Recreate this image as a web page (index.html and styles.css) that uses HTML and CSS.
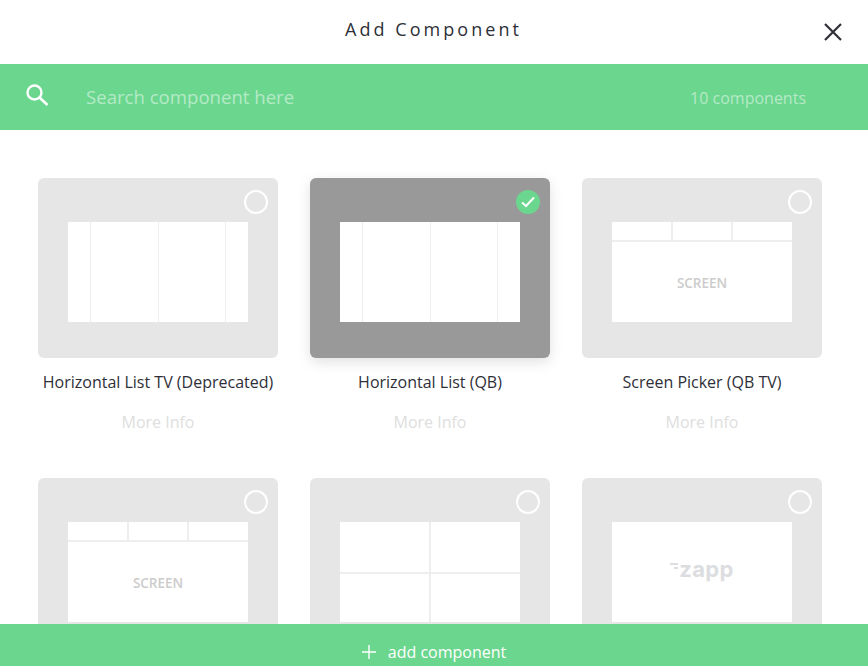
FILE: index.html
```html
<!doctype html>
<html>
<head>
    <title>Add Component</title>
    <link rel="stylesheet" href="styles.css">
</head>
<body>
    <div class="modal">
        <div class="modal-header">
            <div class="modal-title">Add Component</div>
            <button class="close-button">
                <svg width="20" height="20" viewBox="0 0 20 20"><path d="M2 2 L18 18 M18 2 L2 18" stroke="#2e2f38" stroke-width="2.2" fill="none"/></svg>
            </button>
        </div>
        <div class="search-bar">
            <svg class="search-icon" width="26" height="26" viewBox="0 0 26 26"><circle cx="10.5" cy="10.5" r="7" stroke="#fff" stroke-width="2.4" fill="none"/><path d="M15.5 15.5 L23.5 23" stroke="#fff" stroke-width="2.6" fill="none"/></svg>
            <input class="search-input" type="text" placeholder="Search component here">
            <div class="search-count">10 components</div>
        </div>
        <div class="grid-scroll">
            <div class="component-grid">
                <div class="component">
                    <div class="thumb">
                        <span class="radio"></span>
                        <div class="preview preview-list">
                            <div class="col-edge"></div><div class="col-mid"></div><div class="col-mid"></div><div class="col-edge"></div>
                        </div>
                    </div>
                    <div class="component-name">Horizontal List TV (Deprecated)</div>
                    <div class="more-info">More Info</div>
                </div>
                <div class="component">
                    <div class="thumb thumb-selected">
                        <span class="radio radio-checked">
                            <svg width="14" height="12" viewBox="0 0 14 12"><path d="M1 6.5 L5 10 L13 1.5" stroke="#fff" stroke-width="2" fill="none"/></svg>
                        </span>
                        <div class="preview preview-list">
                            <div class="col-edge"></div><div class="col-mid"></div><div class="col-mid"></div><div class="col-edge"></div>
                        </div>
                    </div>
                    <div class="component-name">Horizontal List (QB)</div>
                    <div class="more-info">More Info</div>
                </div>
                <div class="component">
                    <div class="thumb">
                        <span class="radio"></span>
                        <div class="preview preview-screen">
                            <div class="tabs"><div></div><div></div><div></div></div>
                            <div class="screen-label">SCREEN</div>
                        </div>
                    </div>
                    <div class="component-name">Screen Picker (QB TV)</div>
                    <div class="more-info">More Info</div>
                </div>
                <div class="component">
                    <div class="thumb">
                        <span class="radio"></span>
                        <div class="preview preview-screen">
                            <div class="tabs"><div></div><div></div><div></div></div>
                            <div class="screen-label">SCREEN</div>
                        </div>
                    </div>
                </div>
                <div class="component">
                    <div class="thumb">
                        <span class="radio"></span>
                        <div class="preview preview-quad">
                            <div></div><div></div><div></div><div></div>
                        </div>
                    </div>
                </div>
                <div class="component">
                    <div class="thumb">
                        <span class="radio"></span>
                        <div class="preview preview-logo">
                            <span class="logo-bars"><i></i><i></i></span><span class="logo-text">zapp</span>
                        </div>
                    </div>
                </div>
            </div>
        </div>
        <div class="add-bar">
            <svg width="14" height="14" viewBox="0 0 14 14"><path d="M7 0 V14 M0 7 H14" stroke="#fff" stroke-width="1.4" fill="none"/></svg>
            <span>add component</span>
        </div>
    </div>
</body>
</html>
```

FILE: styles.css
```css
body {
    font-family: "Open Sans", sans-serif;
    margin: 0;
    padding: 0;
    background-color: #fff;
}
.modal {
    display: flex;
    flex-direction: column;
    height: 100vh;
    overflow: hidden;
}
.modal-header {
    flex: none;
    height: 64px;
    display: flex;
    align-items: center;
    justify-content: center;
    position: relative;
}
.modal-title {
    font-size: 18px;
    letter-spacing: 3.05px;
    color: #2e2f38;
    margin: 0 1px 6px 0;
}
.close-button {
    position: absolute;
    top: 22px;
    right: 25px;
    width: 20px;
    height: 20px;
    padding: 0;
    border: none;
    background: none;
}
.search-bar {
    flex: none;
    height: 66px;
    background-color: #6ad68e;
    display: flex;
    align-items: center;
    padding: 0 62px 0 24px;
}
.search-icon {
    flex: none;
    margin: 0 36px 5px 0;
}
.search-input {
    flex: 1;
    border: none;
    outline: none;
    padding: 0;
    margin-bottom: 2px;
    background: none;
    font-family: inherit;
    font-size: 18.6px;
    color: #fff;
}
.search-input::placeholder {
    color: rgba(255,255,255,0.5);
    opacity: 1;
}
.search-count {
    font-size: 16px;
    color: rgba(255,255,255,0.5);
    margin-top: 2px;
}
.grid-scroll {
    flex: 1;
    min-height: 0;
    overflow: hidden;
    padding: 48px 0 0 38px;
}
.component-grid {
    display: grid;
    grid-template-columns: repeat(3, 240px);
    grid-auto-rows: 300px;
    column-gap: 32px;
}
.thumb {
    position: relative;
    height: 180px;
    box-sizing: border-box;
    padding-top: 44px;
    background-color: #e6e6e6;
    border-radius: 6px;
}
.thumb-selected {
    background-color: #999;
    box-shadow: 0 4px 14px rgba(0,0,0,0.12);
}
.radio {
    position: absolute;
    top: 12px;
    right: 10px;
    width: 24px;
    height: 24px;
    box-sizing: border-box;
    border: 2px solid #fff;
    border-radius: 50%;
}
.radio-checked {
    border: none;
    background-color: #6ad68e;
    display: flex;
    align-items: center;
    justify-content: center;
}
.preview {
    width: 180px;
    height: 100px;
    margin: 0 auto 0 30px;
    background-color: #fff;
}
.preview-list {
    display: flex;
}
.col-edge {
    width: 22px;
}
.col-mid {
    flex: 1;
}
.preview-list div + div {
    border-left: 1px solid #eee;
}
.preview-screen {
    display: flex;
    flex-direction: column;
}
.tabs {
    flex: none;
    height: 18px;
    display: flex;
    border-bottom: 2px solid #eee;
}
.tabs div {
    flex: 1;
}
.tabs div + div {
    border-left: 2px solid #eee;
}
.screen-label {
    flex: 1;
    display: flex;
    align-items: center;
    justify-content: center;
    font-size: 13.5px;
    font-weight: 600;
    color: #ccc;
    padding-top: 2px;
}
.preview-quad {
    display: grid;
    grid-template-columns: 89px 91px;
    grid-template-rows: 50px 50px;
}
.preview-quad div:nth-child(even) {
    border-left: 2px solid #eee;
}
.preview-quad div:nth-child(n+3) {
    border-top: 2px solid #eee;
}
.preview-logo {
    display: flex;
    align-items: center;
    justify-content: center;
    padding-bottom: 6px;
    box-sizing: border-box;
}
.logo-bars {
    display: flex;
    flex-direction: column;
    align-items: flex-end;
    gap: 2px;
    margin: 0 1px 6px 0;
}
.logo-bars i {
    display: block;
    width: 8px;
    height: 2px;
    background-color: #dcdde1;
}
.logo-bars i + i {
    width: 4px;
}
.logo-text {
    font-family: "Inter", sans-serif;
    font-size: 22px;
    font-weight: 700;
    letter-spacing: 0.4px;
    line-height: 1;
    color: #dcdde1;
}
.component-name {
    margin-top: 13px;
    font-size: 16px;
    line-height: 22px;
    text-align: center;
    color: #2e2f38;
}
.more-info {
    margin-top: 18px;
    font-size: 16px;
    line-height: 22px;
    text-align: center;
    color: #dedede;
}
.add-bar {
    flex: none;
    height: 42px;
    box-sizing: border-box;
    padding-top: 14px;
    background-color: #6ad68e;
    color: #fff;
    font-size: 16px;
    display: flex;
    align-items: center;
    justify-content: center;
    gap: 12px;
}
```
